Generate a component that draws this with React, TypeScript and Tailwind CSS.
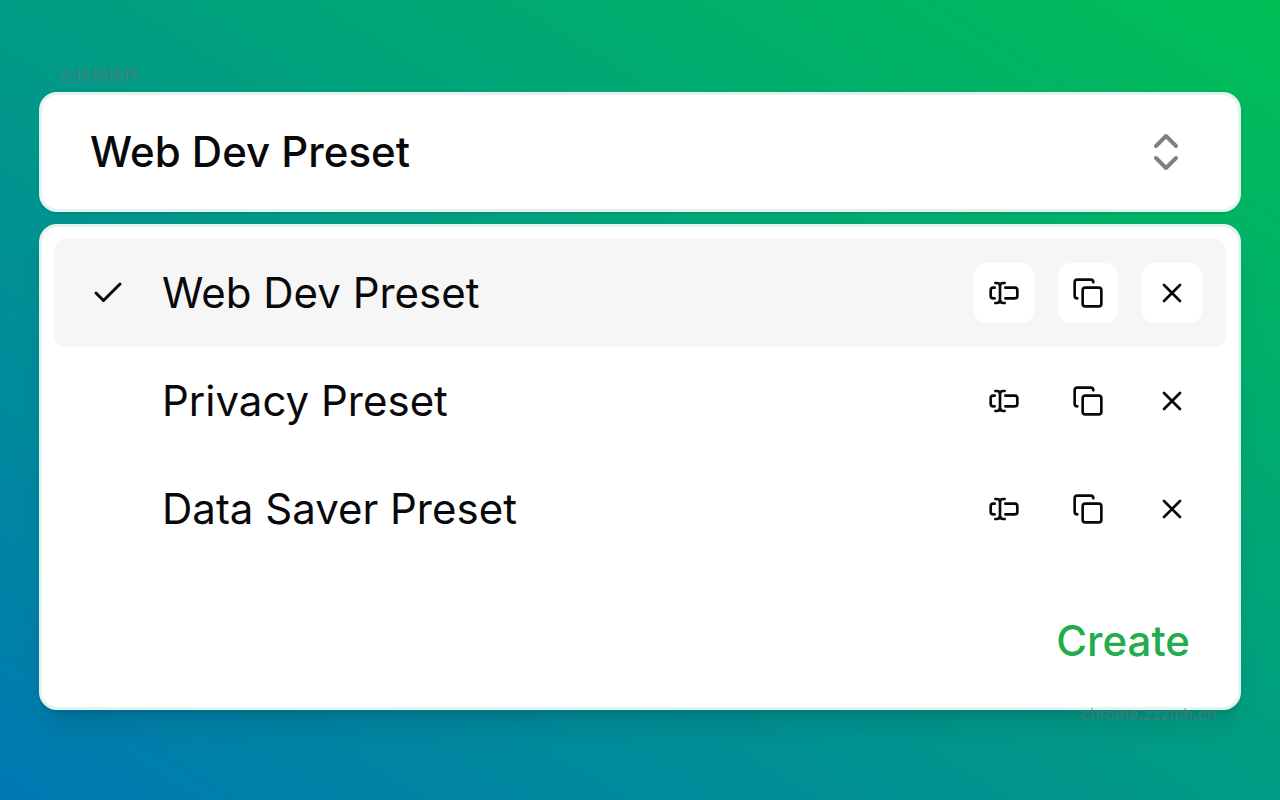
import { useState } from "react";
import { Check, ChevronsUpDown, Copy, X } from "lucide-react";
import clsx from "clsx";

const presets = ["Web Dev Preset", "Privacy Preset", "Data Saver Preset"];

function RenameIcon({ className }: { className?: string }) {
  return (
    <svg
      viewBox="0 0 24 24"
      fill="none"
      stroke="currentColor"
      strokeWidth="2"
      strokeLinecap="round"
      strokeLinejoin="round"
      className={className}
    >
      <path d="M5.5 4.5h1c1.5 0 2.5 .8 2.5 2 0-1.200 1-2 2.500-2h1" />
      <path d="M5.5 19.500h1c1.500 0 2.500-.8 2.500-2 0 1.200 1 2 2.500 2h1" />
      <path d="M5 16H4a2 2 0 0 1-2-2v-4a2 2 0 0 1 2-2h1" />
      <path d="M13 8h7a2 2 0 0 1 2 2v4a2 2 0 0 1-2 2h-7" />
      <path d="M9 6.500v11" />
    </svg>
  );
}

const actions = [
  { label: "Rename", Icon: RenameIcon },
  { label: "Duplicate", Icon: Copy },
  { label: "Delete", Icon: X },
];

function PresetRow({ name, active, onSelect }: { name: string; active: boolean; onSelect: () => void }) {
  return (
    <li className={clsx("flex h-[108px] items-center rounded-xl pr-6 pl-9", active && "bg-[#f6f6f6]")}>
      <button
        type="button"
        aria-pressed={active}
        onClick={onSelect}
        className="flex flex-1 items-center gap-9 text-left"
      >
        <span className="size-9">{active && <Check className="size-9" strokeWidth={2} />}</span>
        <span>{name}</span>
      </button>
      <div className="flex gap-6">
        {actions.map(({ label, Icon }) => (
          <button
            key={label}
            type="button"
            aria-label={`${label} ${name}`}
            className="flex size-[60px] items-center justify-center rounded-xl bg-white"
          >
            <Icon className="size-8" />
          </button>
        ))}
      </div>
    </li>
  );
}

export default function App() {
  const [selected, setSelected] = useState(presets[0]);

  return (
    <main className="relative min-h-screen bg-linear-to-tr/srgb from-[#0078b4] to-[#00bf55] px-[39px] pt-[92px] pb-[90px] font-['Inter',sans-serif] text-[42px] leading-[60px] text-[#09090b]">
      <span className="absolute top-16 left-[60px] font-['Noto_Sans_CJK_SC',sans-serif] text-base leading-5 text-[#6b7280]/60">
        @极简插件
      </span>

      {/* Current preset */}
      <div className="relative">
        <select
          aria-label="Preset"
          value={selected}
          onChange={(e) => setSelected(e.target.value)}
          className="block h-[120px] w-full appearance-none rounded-[18px] border-3 border-[#e4f3f0] bg-white px-12 font-medium shadow-sm"
        >
          {presets.map((name) => (
            <option key={name}>{name}</option>
          ))}
        </select>
        <ChevronsUpDown className="pointer-events-none absolute inset-y-0 right-[51px] my-auto size-12 text-[#808080]" />
      </div>

      {/* Preset list */}
      <section className="mt-3 rounded-[18px] border-3 border-[#e4f3f0] bg-white p-3 shadow-xl">
        <ul>
          {presets.map((name) => (
            <PresetRow key={name} name={name} active={name === selected} onSelect={() => setSelected(name)} />
          ))}
        </ul>
        <div className="flex justify-end pt-12 pr-9 pb-6">
          <button type="button" className="font-medium text-[#21ad4b]">
            Create
          </button>
        </div>
      </section>

      <span className="absolute right-16 bottom-[76px] text-base leading-5 text-[#6b7280]/60">
        chrome.zzzmh.cn
      </span>
    </main>
  );
}
